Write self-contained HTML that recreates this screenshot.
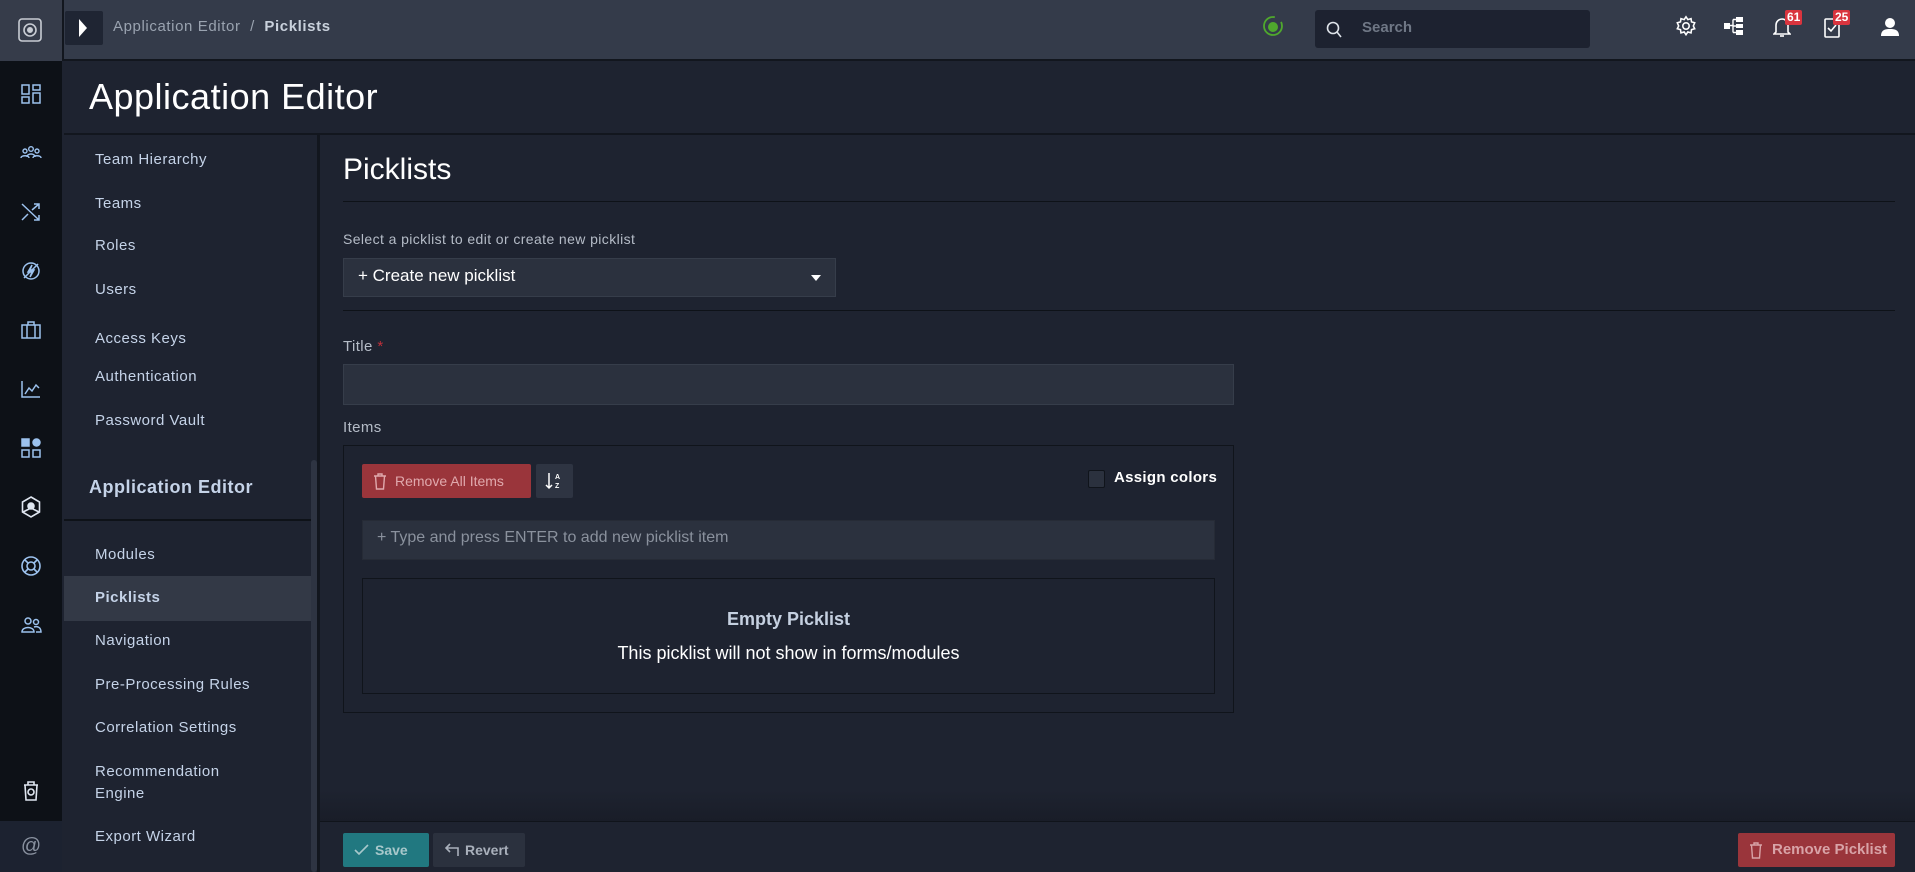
<!DOCTYPE html>
<html><head><meta charset="utf-8"><style>
*{box-sizing:border-box;margin:0;padding:0}
body{width:1915px;height:872px;overflow:hidden;background:#1e2330;font-family:"Liberation Sans",sans-serif;color:#c5d3e8;position:relative}
.abs{position:absolute}
.rail{left:0;top:0;width:62px;height:872px;background:#0d1117}
.logo{left:0;top:0;width:62px;height:61px;background:#363c4a}
.at{left:0;top:821px;width:62px;height:51px;background:#1c2230;color:#8a92a0;font-size:20px;text-align:center;line-height:51px}
.top{left:62px;top:0;width:1853px;height:61px;background:#343b4a;border-bottom:2px solid #12161e;border-left:2px solid #12161e}
.side-i{left:19px;width:24px;height:24px}
.nav{position:absolute;left:95px;font-size:15px;letter-spacing:.5px;color:#c5d3e8}
.lbl{position:absolute;font-size:14px;color:#b5bcc7;letter-spacing:.4px}
.inp{position:absolute;background:#2b313e;border:1px solid #363d4a}
.btn{position:absolute;height:34px;border-radius:2px;font-size:14px;line-height:34px;font-weight:bold}
</style></head><body>
<div class="abs rail"></div>
<div class="abs logo"><svg class="abs" style="left:18px;top:18px" width="24" height="24" viewBox="0 0 24 24" fill="none" stroke="#c8ccd3" stroke-width="1.6"><rect x="1" y="1" width="22" height="22" rx="3"/><circle cx="12" cy="12" r="6"/><circle cx="12" cy="12" r="2.2" fill="#c8ccd3"/></svg></div>
<div class="abs at">@</div>
<svg class="abs side-i" style="top:82px" viewBox="0 0 24 24" fill="none" stroke="#9cc2ee" stroke-width="1.5"><rect x="3" y="3" width="7" height="9"/><rect x="14" y="3" width="7" height="5"/><rect x="3" y="15" width="7" height="6"/><rect x="14" y="11" width="7" height="10"/></svg>
<svg class="abs side-i" style="top:141px" viewBox="0 0 24 24" fill="none" stroke="#9cc2ee" stroke-width="1.4"><circle cx="6" cy="10" r="2"/><circle cx="12" cy="8" r="2.3"/><circle cx="18" cy="10" r="2"/><path d="M2 17c0-3 8-3 8 0M8 16c0-4 8-4 8 0M14 17c0-3 8-3 8 0"/></svg>
<svg class="abs side-i" style="top:200px" viewBox="0 0 24 24" fill="none" stroke="#9cc2ee" stroke-width="1.5"><path d="M3 4l17 16M3 20l6-6M13 10l7-6M15 4h5v5M15 20h5v-5"/></svg>
<svg class="abs side-i" style="top:259px" viewBox="0 0 24 24" fill="none" stroke="#9cc2ee" stroke-width="1.5"><circle cx="12" cy="12" r="8"/><path d="M13 6l-4 7h4l-2 5 4-7h-4z" fill="#9cc2ee"/><path d="M5 19L19 5"/></svg>
<svg class="abs side-i" style="top:318px" viewBox="0 0 24 24" fill="none" stroke="#9cc2ee" stroke-width="1.5"><rect x="3" y="7" width="18" height="13"/><path d="M9 7V4h6v3M8 7v13M16 7v13"/></svg>
<svg class="abs side-i" style="top:377px" viewBox="0 0 24 24" fill="none" stroke="#9cc2ee" stroke-width="1.5"><path d="M3 4v16h18M6 17l4-6 3 3 4-6 3 3"/></svg>
<svg class="abs side-i" style="top:436px" viewBox="0 0 24 24" fill="#9cc2ee" stroke="#9cc2ee" stroke-width="1.5"><rect x="3" y="3" width="7" height="7"/><circle cx="17.5" cy="6.5" r="3.5"/><rect x="3" y="14" width="7" height="7" fill="none"/><rect x="14" y="14" width="7" height="7" fill="none"/></svg>
<svg class="abs side-i" style="top:495px" viewBox="0 0 24 24" fill="none" stroke="#dfe6f0" stroke-width="1.6"><path d="M12 2l8.5 5v10L12 22l-8.5-5V7z"/><circle cx="12" cy="11" r="3" fill="#dfe6f0"/><path d="M4 17l8-4 8 4"/></svg>
<svg class="abs side-i" style="top:554px" viewBox="0 0 24 24" fill="none" stroke="#9cc2ee" stroke-width="1.6"><circle cx="12" cy="12" r="9"/><circle cx="12" cy="12" r="4"/><path d="M5.5 5.5l3.5 3.5M18.5 5.5L15 9M5.5 18.5L9 15M18.5 18.5L15 15"/></svg>
<svg class="abs side-i" style="top:613px" viewBox="0 0 24 24" fill="none" stroke="#9cc2ee" stroke-width="1.5"><circle cx="9" cy="8" r="3"/><circle cx="17" cy="9" r="2.5"/><path d="M3 19c0-6 12-6 12 0zM15 14c3-1 7 0 7 5h-5"/></svg>
<svg class="abs side-i" style="top:779px" viewBox="0 0 24 24" fill="none" stroke="#dfe6f0" stroke-width="1.6"><path d="M5 6h14M9 6V3h6v3M6 6l1 15h10l1-15"/><circle cx="12" cy="13" r="3"/></svg>

<div class="abs top"></div>
<div class="abs" style="left:65px;top:11px;width:38px;height:34px;background:#1f2533;border-radius:2px"></div>
<svg class="abs" style="left:77px;top:17px" width="12" height="22" viewBox="0 0 12 22"><path d="M2 2l8 9-8 9z" fill="#fff"/></svg>
<div class="abs" style="left:113px;top:18px;font-size:15px;color:#9aa3b0;letter-spacing:.6px">Application Editor&nbsp; / &nbsp;<span style="color:#c9d1dc;font-weight:bold">Picklists</span></div>
<svg class="abs" style="left:1262px;top:15px" width="22" height="22" viewBox="0 0 22 22"><circle cx="11" cy="11" r="9" fill="none" stroke="#4fa82d" stroke-width="1.8" stroke-dasharray="44 8"/><circle cx="11" cy="12" r="5" fill="#4fa82d"/></svg>
<div class="abs" style="left:1315px;top:10px;width:275px;height:38px;background:#1d2230;border-radius:3px"></div>
<svg class="abs" style="left:1326px;top:21px" width="16" height="17" viewBox="0 0 16 17" fill="none" stroke="#dfe4ea" stroke-width="1.6"><circle cx="7" cy="7" r="5.5"/><path d="M11 11l4 5"/></svg>
<div class="abs" style="left:1362px;top:19px;font-size:15px;color:#6f7785;font-weight:bold">Search</div>
<svg class="abs" style="left:1675px;top:15px" width="22" height="22" viewBox="0 0 24 24" fill="none" stroke="#fff" stroke-width="1.7"><circle cx="12" cy="12" r="3.5"/><path d="M12 2l2 3 3.5-1 .5 3.5 3.5 1-1.5 3.5 1.5 3-3.5 1-.5 3.5-3.5-1-2 3-2-3-3.5 1-.5-3.5-3.5-1L4 12 2.5 8.5l3.5-1L6.5 4 10 5z"/></svg>
<svg class="abs" style="left:1724px;top:16px" width="20" height="20" viewBox="0 0 20 20" fill="#fff"><rect x="0" y="7" width="6" height="6"/><rect x="12" y="1" width="7" height="5"/><rect x="12" y="8" width="7" height="4"/><rect x="12" y="14" width="7" height="5"/><path d="M6 9.5h3M9 3.5v13M9 3.5h3M9 10h3M9 16.5h3" stroke="#fff" stroke-width="1.4"/></svg>
<svg class="abs" style="left:1773px;top:16px" width="18" height="22" viewBox="0 0 18 22" fill="none" stroke="#fff" stroke-width="1.6"><path d="M3 16V9a6 6 0 0112 0v7l2 2H1z"/><path d="M7 20h4"/></svg>
<div class="abs" style="left:1785px;top:10px;background:#d9343e;color:#fff;font-size:12px;font-weight:bold;padding:0 2px;height:15px;line-height:15px;border-radius:2px">61</div>
<svg class="abs" style="left:1824px;top:17px" width="16" height="21" viewBox="0 0 16 21" fill="none" stroke="#fff" stroke-width="1.6"><rect x="1" y="2" width="14" height="18" rx="1"/><path d="M4 11l3 3 5-6"/></svg>
<div class="abs" style="left:1833px;top:10px;background:#d9343e;color:#fff;font-size:12px;font-weight:bold;padding:0 2px;height:15px;line-height:15px;border-radius:2px">25</div>
<svg class="abs" style="left:1880px;top:17px" width="20" height="20" viewBox="0 0 20 20" fill="#fff"><circle cx="10" cy="6" r="5"/><path d="M1 19c0-6 4-7 9-7s9 1 9 7z"/></svg>

<div class="abs" style="left:64px;top:63px;width:1851px;height:72px;background:#1e2330;border-bottom:2px solid #12161e"></div>
<div class="abs" style="left:89px;top:76px;font-size:36px;color:#fff;letter-spacing:.5px">Application Editor</div>

<div class="abs" style="left:317px;top:135px;width:3px;height:737px;background:#12161e"></div>
<div class="abs" style="left:311px;top:460px;width:6px;height:412px;background:#2e3442;border-radius:3px"></div>
<div class="nav" style="top:151px">Team Hierarchy</div>
<div class="nav" style="top:195px">Teams</div>
<div class="nav" style="top:237px">Roles</div>
<div class="nav" style="top:281px">Users</div>
<div class="nav" style="top:330px">Access Keys</div>
<div class="nav" style="top:368px">Authentication</div>
<div class="nav" style="top:412px">Password Vault</div>
<div class="abs" style="left:89px;top:477px;font-size:18px;font-weight:bold;color:#c5d3e8;letter-spacing:.5px">Application Editor</div>
<div class="abs" style="left:64px;top:519px;width:247px;height:2px;background:#0e1218"></div>
<div class="nav" style="top:546px">Modules</div>
<div class="abs" style="left:64px;top:576px;width:247px;height:45px;background:#333946"></div>
<div class="nav" style="top:589px;font-weight:bold">Picklists</div>
<div class="nav" style="top:632px">Navigation</div>
<div class="nav" style="top:676px">Pre-Processing Rules</div>
<div class="nav" style="top:719px">Correlation Settings</div>
<div class="nav" style="top:763px">Recommendation</div>
<div class="nav" style="top:785px">Engine</div>
<div class="nav" style="top:828px">Export Wizard</div>

<div class="abs" style="left:343px;top:153px;font-size:30px;color:#fff">Picklists</div>
<div class="abs" style="left:343px;top:201px;width:1552px;height:1px;background:#0e1218"></div>
<div class="lbl" style="left:343px;top:231px">Select a picklist to edit or create new picklist</div>
<div class="inp" style="left:343px;top:258px;width:493px;height:39px"></div>
<div class="abs" style="left:358px;top:266px;font-size:17px;color:#fff">+ Create new picklist</div>
<svg class="abs" style="left:810px;top:274px" width="12" height="8" viewBox="0 0 12 8"><path d="M1 1h10L6 7z" fill="#fff"/></svg>
<div class="abs" style="left:343px;top:310px;width:1552px;height:1px;background:#0e1218"></div>
<div class="lbl" style="left:343px;top:338px;font-size:15px">Title <span style="color:#c0303a">*</span></div>
<div class="inp" style="left:343px;top:364px;width:891px;height:41px"></div>
<div class="lbl" style="left:343px;top:419px;font-size:15px">Items</div>
<div class="abs" style="left:343px;top:445px;width:891px;height:268px;border:1px solid #10141b"></div>
<div class="btn" style="left:362px;top:464px;width:169px;background:#9a353b;color:#e0a9ad;padding-left:33px;font-weight:normal;font-size:14px">Remove All Items</div>
<svg class="abs" style="left:373px;top:473px" width="14" height="17" viewBox="0 0 14 17" fill="none" stroke="#e0a9ad" stroke-width="1.4"><path d="M1 3h12M5 3V1h4v2M2.5 3l1 13h7l1-13"/></svg>
<div class="btn" style="left:536px;top:464px;width:37px;background:#2e3442"></div>
<svg class="abs" style="left:545px;top:471px" width="18" height="20" viewBox="0 0 18 20" fill="none" stroke="#fff" stroke-width="1.5"><path d="M4 2v15M1 14l3 3 3-3"/><text x="10" y="8" font-size="7" fill="#fff" stroke="none" font-family="Liberation Sans" font-weight="bold">A</text><text x="10" y="17" font-size="7" fill="#fff" stroke="none" font-family="Liberation Sans" font-weight="bold">Z</text></svg>
<div class="abs" style="left:1088px;top:470px;width:17px;height:18px;background:#2b313e;border:1px solid #10141b;border-radius:2px"></div>
<div class="abs" style="left:1114px;top:469px;font-size:15px;color:#fff;font-weight:bold;letter-spacing:.3px">Assign colors</div>
<div class="inp" style="left:362px;top:520px;width:853px;height:40px;border-color:#262b36"></div>
<div class="abs" style="left:377px;top:529px;font-size:16px;color:#8a919d">+ Type and press ENTER to add new picklist item</div>
<div class="abs" style="left:362px;top:578px;width:853px;height:116px;border:1px solid #10141b"></div>
<div class="abs" style="left:362px;top:609px;width:853px;text-align:center;font-size:18px;color:#c5d0e0;font-weight:bold">Empty Picklist</div>
<div class="abs" style="left:362px;top:643px;width:853px;text-align:center;font-size:18px;color:#fff">This picklist will not show in forms/modules</div>

<div class="abs" style="left:320px;top:790px;width:1595px;height:31px;background:linear-gradient(#1e2330,#191d28)"></div>
<div class="abs" style="left:320px;top:821px;width:1595px;height:51px;background:#1e2330;border-top:1px solid #10141b"></div>
<div class="btn" style="left:343px;top:833px;width:86px;background:#217880;color:#a8c8cb;padding-left:32px">Save</div>
<svg class="abs" style="left:354px;top:844px" width="15" height="12" viewBox="0 0 15 12" fill="none" stroke="#a8c8cb" stroke-width="1.6"><path d="M1 6l4 4 9-9"/></svg>
<div class="btn" style="left:433px;top:833px;width:92px;background:#2b313e;color:#a9b0bb;padding-left:32px">Revert</div>
<svg class="abs" style="left:445px;top:843px" width="15" height="14" viewBox="0 0 15 14" fill="none" stroke="#a9b0bb" stroke-width="1.6"><path d="M5 1L1 5l4 4M1 5h12v8"/></svg>
<div class="btn" style="left:1738px;top:833px;width:157px;background:#9a353b;color:#d8a3a7;padding-left:34px;font-size:15px">Remove Picklist</div>
<svg class="abs" style="left:1749px;top:842px" width="14" height="17" viewBox="0 0 14 17" fill="none" stroke="#d8a3a7" stroke-width="1.4"><path d="M1 3h12M5 3V1h4v2M2.5 3l1 13h7l1-13"/></svg>
</body></html>
